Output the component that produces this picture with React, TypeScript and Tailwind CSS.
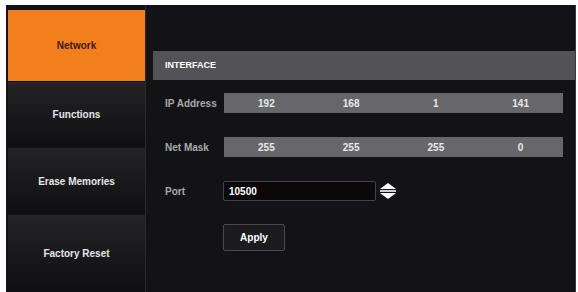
import React from "react";

const font = { fontFamily: '"Liberation Sans", Arial, sans-serif' };

const menu = [
  { label: "Network", h: "h-[71px]", active: true },
  { label: "Functions", h: "h-[65px]", active: false },
  { label: "Erase Memories", h: "h-[66px]", active: false },
  { label: "Factory Reset", h: "h-[77px]", active: false },
];

const IpRow: React.FC<{ label: string; values: string[] }> = ({ label, values }) => (
  <div className="flex items-center h-[20px]">
    <div className="w-[59px] text-[10px] font-bold text-[#a9a9ae] whitespace-nowrap">{label}</div>
    <div className="flex w-[339px] h-full bg-[#66666b]">
      {values.map((v, i) => (
        <div key={i} className="flex-1 flex items-center justify-center text-[10px] font-bold text-[#e8e8ea]">
          {v}
        </div>
      ))}
    </div>
  </div>
);

const App: React.FC = () => {
  return (
    <div className="w-[578px] h-[292px] bg-white pt-[5px] pl-[6px] pr-[2px] overflow-hidden" style={font}>
      <div className="flex h-full bg-[#131317] border-r border-[#3a3a3e]">
        {/* Sidebar */}
        <div className="flex flex-col gap-[1px] w-[140px] pl-[2px] pt-[5px] border-r border-[#2a2a2e]">
          {menu.map((m) => (
            <div
              key={m.label}
              className={`${m.h} w-[137px] flex items-center justify-center text-[10px] font-bold ${
                m.active
                  ? "bg-[#f27f1b] text-[#3a1a05]"
                  : "bg-gradient-to-b from-[#242427] to-[#0f0f11] text-[#e6e6e8]"
              }`}
            >
              {m.label}
            </div>
          ))}
        </div>

        {/* Content */}
        <div className="flex-1 pt-[46px] pl-[7px]">
          <div className="h-[29px] bg-[#525257] flex items-center pl-[12px] text-[9px] font-bold text-white">
            INTERFACE
          </div>
          <div className="pl-[12px]">
            <div className="mt-[13px]">
              <IpRow label="IP Address" values={["192", "168", "1", "141"]} />
            </div>
            <div className="mt-[24px]">
              <IpRow label="Net Mask" values={["255", "255", "255", "0"]} />
            </div>
            <div className="mt-[24px] flex items-center h-[20px]">
              <div className="w-[58px] text-[10px] font-bold text-[#a9a9ae]">Port</div>
              <div className="w-[153px] h-[20px] bg-[#0a0808] border border-[#444448] rounded-[2px] flex items-center pl-[5px] text-[10px] font-bold text-white">
                10500
              </div>
              <svg width="18" height="16" viewBox="0 0 18 16" className="ml-[3px]">
                <polygon points="9,0 17,6 1,6" fill="#ffffff" />
                <rect x="1" y="7.2" width="16" height="1.6" fill="#ffffff" />
                <polygon points="1,10 17,10 9,16" fill="#ffffff" />
              </svg>
            </div>
            <div className="mt-[23px] ml-[58px]">
              <div className="w-[62px] h-[27px] bg-[#1c1c1f] border border-[#4a4a4e] rounded-[2px] flex items-center justify-center text-[10px] font-bold text-white">
                Apply
              </div>
            </div>
          </div>
        </div>
      </div>
    </div>
  );
};

export default App;
